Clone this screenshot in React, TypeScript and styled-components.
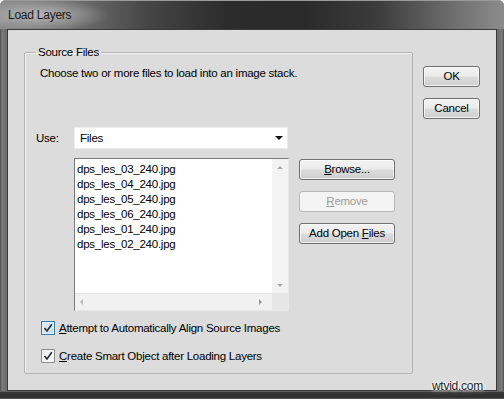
import styled, { createGlobalStyle } from "styled-components";

const GlobalStyle = createGlobalStyle`
  html, body {
    margin: 0;
    padding: 0;
  }
  body {
    width: 504px;
    height: 399px;
    overflow: hidden;
    font-family: "Liberation Sans", Arial, sans-serif;
    font-size: 11.5px;
    letter-spacing: -0.25px;
    color: #000;
  }
`;

const Window = styled.div`
  position: relative;
  width: 504px;
  height: 399px;
  box-sizing: border-box;
  display: flex;
  flex-direction: column;
  background: linear-gradient(90deg, #4a4a4a 0, #7c7c7c 2px, #6c6c6c 6px, #6c6c6c calc(100% - 6px), #7c7c7c calc(100% - 2px), #4a4a4a 100%);
  border-radius: 6px 6px 0 0;
  overflow: hidden;
`;

const TitleBar = styled.div`
  height: 29px;
  flex: none;
  display: flex;
  align-items: center;
  padding-left: 8px;
  background:
    radial-gradient(ellipse 70px 16px at 40px 15px, rgba(190, 190, 190, 0.85), rgba(190, 190, 190, 0) 100%),
    linear-gradient(90deg, #8a8a8a 0%, #767676 12%, #444 30%, #2c2c2c 45%, #2a2a2a 60%, #3c3c3c 75%, #6e6e6e 90%, #8c8c8c 100%);
  box-shadow: inset 0 1px 0 #9a9a9a;
`;

const Title = styled.span`
  font-size: 12px;
  color: #1a1a1a;
  margin-top: 1px;
`;

const Body = styled.div`
  flex: 1;
  display: flex;
  padding: 0 7px 8px 7px;
  background: linear-gradient(180deg, transparent calc(100% - 8px), #8a8a8a calc(100% - 8px), #3a3a3a calc(100% - 7px), #2e2e2e calc(100% - 2px), #5a5a5a 100%);
`;

const Client = styled.div`
  flex: 1;
  display: flex;
  align-items: flex-start;
  padding: 15px 0 0 16px;
  background: #dcdcdc;
  border: 1px solid #3a3a3a;
`;

const GroupBox = styled.fieldset`
  box-sizing: border-box;
  width: 389px;
  height: 329px;
  margin: 0;
  padding: 0 14px 0 15px;
  border: 1px solid #b2b2b2;
  border-radius: 2px;
  box-shadow: inset 1px 1px 0 #f4f4f4;
  display: flex;
  flex-direction: column;
`;

const Legend = styled.legend`
  padding: 0 2px;
  margin-left: -4px;
  line-height: 14px;
`;

const Intro = styled.div`
  margin-top: 7px;
  line-height: 15px;
`;

const UseRow = styled.div`
  margin-top: 46px;
  margin-left: -4px;
  height: 22px;
  display: flex;
  align-items: center;
`;

const UseLabel = styled.span`
  width: 38px;
`;

const Select = styled.div`
  box-sizing: border-box;
  width: 214px;
  height: 22px;
  display: flex;
  align-items: center;
  justify-content: space-between;
  padding: 0 4px 0 5px;
  background: #fff;
  border: 1px solid #ececec;
`;

const Caret = styled.span`
  width: 0;
  height: 0;
  border-left: 4px solid transparent;
  border-right: 4px solid transparent;
  border-top: 4px solid #111;
`;

const ListRow = styled.div`
  margin-top: 9px;
  padding-left: 34px;
  display: flex;
  gap: 10px;
`;

const ListBox = styled.div`
  box-sizing: border-box;
  width: 215px;
  height: 153px;
  display: grid;
  grid-template-columns: 1fr 16px;
  grid-template-rows: 1fr 17px;
  background: #fff;
  border: 1px solid;
  border-color: #7a7a7a #e8e8e8 #e8e8e8 #7a7a7a;
`;

const Items = styled.div`
  padding: 3px 0 0 2px;
  line-height: 15px;
`;

const VScroll = styled.div`
  background: #f3f3f3;
  display: flex;
  flex-direction: column;
  justify-content: space-between;
  align-items: center;
  padding: 7px 0 6px;
`;

const HScroll = styled.div`
  background: #f1f1f1;
  border-top: 1px solid #e4e4e4;
  display: flex;
  justify-content: space-between;
  align-items: center;
  padding: 0 10px 0 5px;
`;

const Corner = styled.div`
  background: #e6e6e6;
`;

const Arrow = styled.span<{ $dir: "up" | "down" | "left" | "right" }>`
  width: 0;
  height: 0;
  ${({ $dir }) =>
    $dir === "up"
      ? "border-left: 3px solid transparent; border-right: 3px solid transparent; border-bottom: 3px solid #a8a8a8;"
      : $dir === "down"
      ? "border-left: 3px solid transparent; border-right: 3px solid transparent; border-top: 3px solid #a8a8a8;"
      : $dir === "left"
      ? "border-top: 3px solid transparent; border-bottom: 3px solid transparent; border-right: 3px solid #b8b8b8;"
      : "border-top: 3px solid transparent; border-bottom: 3px solid transparent; border-left: 3px solid #9a9a9a;"}
`;

const ButtonColumn = styled.div`
  margin-top: 1px;
  display: flex;
  flex-direction: column;
  gap: 11px;
`;

const Button = styled.button<{ $width: number }>`
  box-sizing: border-box;
  width: ${({ $width }) => $width}px;
  height: 21px;
  padding: 0;
  font-family: inherit;
  font-size: 11.5px;
  letter-spacing: -0.25px;
  line-height: 19px;
  color: #000;
  border: 1px solid #707070;
  border-radius: 3px;
  background: linear-gradient(180deg, #f2f2f2 0%, #ebebeb 48%, #dcdcdc 52%, #cfcfcf 100%);
  box-shadow: inset 0 0 0 1px rgba(255, 255, 255, 0.7);

  &:disabled {
    color: #9c9c9c;
    border-color: #b7b7b7;
    background: #f4f4f4;
    box-shadow: none;
  }
`;

const CheckRow = styled.label<{ $gap: number }>`
  margin-top: ${({ $gap }) => $gap}px;
  margin-left: 1px;
  height: 14px;
  display: flex;
  align-items: center;
  gap: 4px;
  line-height: 14px;
`;

const Box = styled.span<{ $focus?: boolean }>`
  box-sizing: border-box;
  width: 14px;
  height: 14px;
  display: flex;
  align-items: center;
  justify-content: center;
  border: 1px solid ${({ $focus }) => ($focus ? "#3d7bad" : "#8e8f8f")};
  background: ${({ $focus }) =>
    $focus ? "linear-gradient(135deg, #e3f1fb, #bfdcf2)" : "linear-gradient(135deg, #ededed, #fafafa)"};
  box-shadow: inset 0 0 0 1px ${({ $focus }) => ($focus ? "#dff0fb" : "#f4f4f4")};
`;

const SideColumn = styled.div`
  margin: 21px 0 0 10px;
  display: flex;
  flex-direction: column;
  gap: 11px;
`;

const Watermark = styled.div`
  position: absolute;
  right: 21px;
  bottom: 6px;
  font-size: 12px;
  line-height: 14px;
  color: #1e1e1e;
  text-shadow: 0 0 2px #fff, 0 0 3px #fff, 0 0 4px #fff;
`;

const files = [
  "dps_les_03_240.jpg",
  "dps_les_04_240.jpg",
  "dps_les_05_240.jpg",
  "dps_les_06_240.jpg",
  "dps_les_01_240.jpg",
  "dps_les_02_240.jpg",
];

function Check() {
  return (
    <svg width="10" height="10" viewBox="0 0 10 10">
      <path d="M1.5 5 L4 8 L8.8 1.2" fill="none" stroke="#2b2b2b" strokeWidth="1.6" />
    </svg>
  );
}

export default function App() {
  return (
    <>
      <GlobalStyle />
      <Window>
        <TitleBar>
          <Title>Load Layers</Title>
        </TitleBar>
        <Body>
          <Client>
            <GroupBox>
              <Legend>Source Files</Legend>
              <Intro>Choose two or more files to load into an image stack.</Intro>
              <UseRow>
                <UseLabel>Use:</UseLabel>
                <Select>
                  <span>Files</span>
                  <Caret />
                </Select>
              </UseRow>
              <ListRow>
                <ListBox>
                  <Items>
                    {files.map((f) => (
                      <div key={f}>{f}</div>
                    ))}
                  </Items>
                  <VScroll>
                    <Arrow $dir="up" />
                    <Arrow $dir="down" />
                  </VScroll>
                  <HScroll>
                    <Arrow $dir="left" />
                    <Arrow $dir="right" />
                  </HScroll>
                  <Corner />
                </ListBox>
                <ButtonColumn>
                  <Button $width={96}>
                    <u>B</u>rowse...
                  </Button>
                  <Button $width={96} disabled>
                    <u>R</u>emove
                  </Button>
                  <Button $width={96}>
                    Add Open <u>F</u>iles
                  </Button>
                </ButtonColumn>
              </ListRow>
              <CheckRow $gap={10}>
                <Box $focus>
                  <Check />
                </Box>
                <span>
                  <u>A</u>ttempt to Automatically Align Source Images
                </span>
              </CheckRow>
              <CheckRow $gap={14}>
                <Box>
                  <Check />
                </Box>
                <span>
                  <u>C</u>reate Smart Object after Loading Layers
                </span>
              </CheckRow>
            </GroupBox>
            <SideColumn>
              <Button $width={57}>OK</Button>
              <Button $width={57}>Cancel</Button>
            </SideColumn>
          </Client>
        </Body>
        <Watermark>wtvid.com</Watermark>
      </Window>
    </>
  );
}
